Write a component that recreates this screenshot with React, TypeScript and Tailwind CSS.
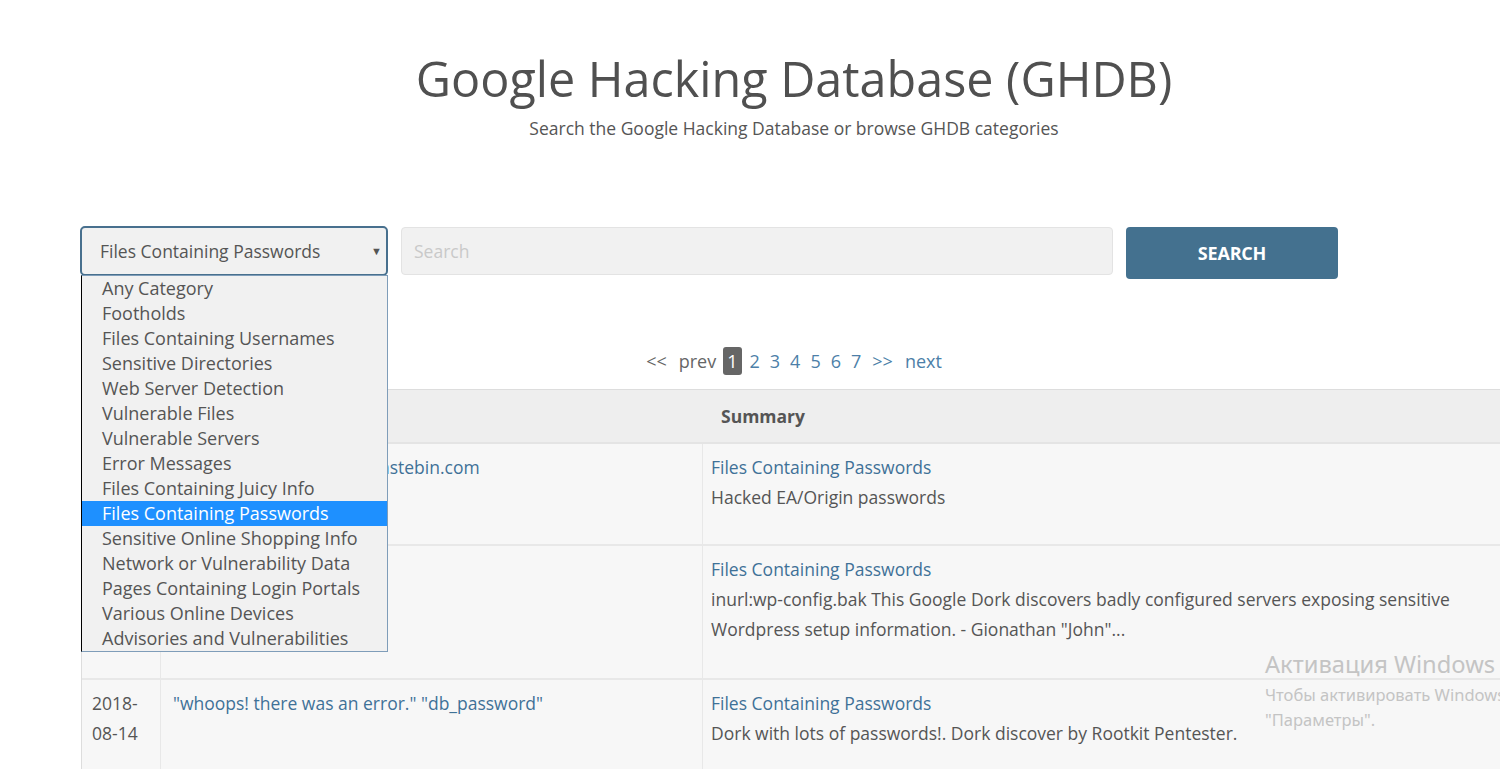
import React from "react";

const categories = [
  "Any Category",
  "Footholds",
  "Files Containing Usernames",
  "Sensitive Directories",
  "Web Server Detection",
  "Vulnerable Files",
  "Vulnerable Servers",
  "Error Messages",
  "Files Containing Juicy Info",
  "Files Containing Passwords",
  "Sensitive Online Shopping Info",
  "Network or Vulnerability Data",
  "Pages Containing Login Portals",
  "Various Online Devices",
  "Advisories and Vulnerabilities",
];

const rows = [
  {
    date: ["2018-", "08-21"],
    title: "\"origin\" \"password\" site:pastebin.com",
    cat: "Files Containing Passwords",
    desc: ["Hacked EA/Origin passwords"],
    h: "h-[102px]",
  },
  {
    date: ["2018-", "08-20"],
    title: "inurl:wp-config.bak",
    cat: "Files Containing Passwords",
    desc: [
      "inurl:wp-config.bak This Google Dork discovers badly configured servers exposing sensitive",
      "Wordpress setup information. - Gionathan \"John\"...",
    ],
    h: "h-[134px]",
  },
  {
    date: ["2018-", "08-14"],
    title: "\"whoops! there was an error.\" \"db_password\"",
    cat: "Files Containing Passwords",
    desc: ["Dork with lots of passwords!. Dork discover by Rootkit Pentester."],
    h: "h-[110px]",
  },
];

export default function App() {
  return (
    <div className="relative w-[1500px] h-[769px] overflow-hidden bg-white text-[#555555] font-['Open_Sans',_'Noto_Sans',_sans-serif]">
      <div className="ml-[80px] w-[1428px]">
        <div className="pt-[50px] text-center">
          <h1 className="text-[48.5px] leading-[56px] font-normal text-[#505050]">
            Google Hacking Database (GHDB)
          </h1>
          <p className="mt-[10px] text-[17.5px] leading-[24px] text-[#555555]">
            Search the Google Hacking Database or browse GHDB categories
          </p>
        </div>

        <div className="mt-[86px] flex items-start gap-[13px]">
          <div className="w-[308px] h-[50px] border-2 border-[#48708e] rounded-[5px] bg-[#f1f1f1] flex items-center justify-between pl-[18px] pr-[4px]">
            <span className="text-[17.5px] text-[#555555]">Files Containing Passwords</span>
            <span className="text-[11px] text-[#555555]">▼</span>
          </div>
          <div className="mt-[1px] w-[712px] h-[48px] rounded-[4px] border border-[#e3e3e3] bg-[#f1f1f1] flex items-center pl-[12px]">
            <span className="text-[17.5px] text-[#c9c9c9]">Search</span>
          </div>
          <div className="mt-[1px] w-[212px] h-[52px] rounded-[4px] bg-[#44718f] flex items-center justify-center">
            <span className="text-[18px] font-bold text-white tracking-[-0.2px]">SEARCH</span>
          </div>
        </div>

        <div className="mt-[68px] flex items-center justify-center text-[18px] leading-[28px]">
          <span className="text-[#666666]">&lt;&lt;</span>
          <span className="ml-[12px] text-[#666666]">prev</span>
          <span className="ml-[7px] px-[4px] rounded-[3px] bg-[#666666] text-white">1</span>
          <span className="ml-[8px] text-[#4d7fa8]">2</span>
          <span className="ml-[10px] text-[#4d7fa8]">3</span>
          <span className="ml-[10px] text-[#4d7fa8]">4</span>
          <span className="ml-[10px] text-[#4d7fa8]">5</span>
          <span className="ml-[10px] text-[#4d7fa8]">6</span>
          <span className="ml-[10px] text-[#4d7fa8]">7</span>
          <span className="ml-[11px] text-[#4d7fa8]">&gt;&gt;</span>
          <span className="ml-[12px] text-[#4d7fa8]">next</span>
        </div>

        <div className="mt-[14px] ml-[1px] border-t border-l border-[#dddddd] text-[17.5px]">
          <div className="flex h-[54px] bg-[#eeeeee] border-b-2 border-[#e4e4e4] font-bold text-[#555555]">
            <div className="w-[79px] shrink-0 flex items-center pl-[10px]">Date</div>
            <div className="w-[542px] shrink-0 flex items-center pl-[12px]">Title</div>
            <div className="flex-1 flex items-center pl-[18px]">Summary</div>
          </div>
          {rows.map((r, i) => (
            <div key={i} className={`flex ${r.h} bg-[#f7f7f7] border-b-2 border-[#e8e8e8]`}>
              <div className="w-[79px] shrink-0 pl-[10px] pt-[8px] leading-[30px] border-r border-[#e8e8e8]">
                <div>{r.date[0]}</div>
                <div>{r.date[1]}</div>
              </div>
              <div className="w-[542px] shrink-0 pl-[12px] pt-[8px] leading-[30px] border-r border-[#e8e8e8] text-[#3f7197]">
                {r.title}
              </div>
              <div className="flex-1 pl-[8px] pt-[8px] leading-[30px]">
                <div className="text-[#3f7197]">{r.cat}</div>
                {r.desc.map((d, j) => (
                  <div key={j}>{d}</div>
                ))}
              </div>
            </div>
          ))}
        </div>
      </div>

      <div className="absolute left-[81px] top-[275px] w-[307px] bg-[#f1f1f1] border border-[#7f9db9] border-l-black">
        {categories.map((c) => (
          <div
            key={c}
            className={`h-[25px] leading-[25px] pl-[20px] text-[18px] ${
              c === "Files Containing Passwords" ? "bg-[#1e90ff] text-white" : "text-[#555555]"
            }`}
          >
            {c}
          </div>
        ))}
      </div>

      <div className="absolute left-[1265px] top-[648px] whitespace-nowrap text-[#c4c4c4] font-['Noto_Sans',_sans-serif]">
        <div className="text-[23.7px] leading-[32px]">Активация Windows</div>
        <div className="text-[16.5px] leading-[26px] mt-[2px]">Чтобы активировать Windows</div>
        <div className="text-[16.5px] leading-[24px]">"Параметры".</div>
      </div>
    </div>
  );
}
